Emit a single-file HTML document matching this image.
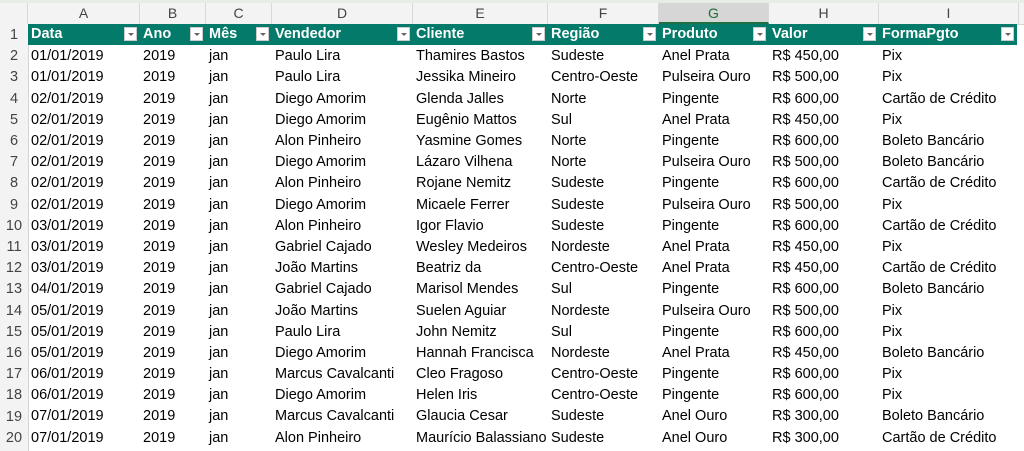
<!DOCTYPE html>
<html><head><meta charset="utf-8"><style>
body{margin:0;width:1024px;height:451px;overflow:hidden;background:#fff;font-family:"Liberation Sans",Calibri,sans-serif;font-size:14.5px;color:#000;position:relative}
.top{position:absolute;left:0;top:0;width:1024px;height:3px;background:#e6ede6}
.colhdr{position:absolute;left:0;top:3px;width:1024px;height:21px;background:#f3f3f3;border-bottom:1px solid #d4d4d4}
.ch{position:absolute;top:3px;height:21px;line-height:21px;text-align:center;color:#444;font-size:14px;border-right:1px solid #d8d8d8;box-sizing:border-box}
.rowhdr{position:absolute;left:0;top:24px;width:28px;height:427px;background:#f3f3f3;border-right:1px solid #d4d4d4}
.rn{position:absolute;left:0;width:28px;text-align:center;color:#444;line-height:21.2px}
table{position:absolute;left:28px;top:24px;border-collapse:collapse;table-layout:fixed}
tr{height:21.2px}
td{padding:2px 0 0 3px;white-space:nowrap;overflow:visible;line-height:19px}
tr.h td{background:#047a6a;color:#fff;font-weight:bold;position:relative;padding-top:0;line-height:21px}
.b{position:absolute;right:3px;top:3px;width:13px;height:14px;background:#fff;border:1px solid #ccc;box-sizing:border-box}
.b:after{content:"";position:absolute;left:3px;top:5px;border-left:3px solid transparent;border-right:3px solid transparent;border-top:3px solid #666}
</style></head><body>
<div class="top"></div>
<div class="colhdr"></div>
<div class="ch" style="left:0;width:28px"></div>
<div class="ch" style="left:28px;width:112px">A</div>
<div class="ch" style="left:140px;width:66px">B</div>
<div class="ch" style="left:206px;width:66px">C</div>
<div class="ch" style="left:272px;width:141px">D</div>
<div class="ch" style="left:413px;width:135px">E</div>
<div class="ch" style="left:548px;width:111px">F</div>
<div class="ch" style="left:659px;width:110px;background:#d6d6d6;color:#1e6b3a;border-bottom:2px solid #1e7145">G</div>
<div class="ch" style="left:769px;width:110px">H</div>
<div class="ch" style="left:879px;width:140px">I</div>
<div class="rowhdr"></div>
<div class="rn" style="top:25px">1<br>2<br>3<br>4<br>5<br>6<br>7<br>8<br>9<br>10<br>11<br>12<br>13<br>14<br>15<br>16<br>17<br>18<br>19<br>20</div>
<table>
<colgroup><col style="width:112px"><col style="width:66px"><col style="width:66px"><col style="width:141px"><col style="width:135px"><col style="width:111px"><col style="width:110px"><col style="width:110px"><col style="width:138px"></colgroup>
<tr class="h"><td>Data<span class="b"></span></td><td>Ano<span class="b"></span></td><td>Mês<span class="b"></span></td><td>Vendedor<span class="b"></span></td><td>Cliente<span class="b"></span></td><td>Região<span class="b"></span></td><td>Produto<span class="b"></span></td><td>Valor<span class="b"></span></td><td>FormaPgto<span class="b"></span></td></tr>
<tr><td>01/01/2019</td><td>2019</td><td>jan</td><td>Paulo Lira</td><td>Thamires Bastos</td><td>Sudeste</td><td>Anel Prata</td><td>R$ 450,00</td><td>Pix</td></tr>
<tr><td>01/01/2019</td><td>2019</td><td>jan</td><td>Paulo Lira</td><td>Jessika Mineiro</td><td>Centro-Oeste</td><td>Pulseira Ouro</td><td>R$ 500,00</td><td>Pix</td></tr>
<tr><td>02/01/2019</td><td>2019</td><td>jan</td><td>Diego Amorim</td><td>Glenda Jalles</td><td>Norte</td><td>Pingente</td><td>R$ 600,00</td><td>Cartão de Crédito</td></tr>
<tr><td>02/01/2019</td><td>2019</td><td>jan</td><td>Diego Amorim</td><td>Eugênio Mattos</td><td>Sul</td><td>Anel Prata</td><td>R$ 450,00</td><td>Pix</td></tr>
<tr><td>02/01/2019</td><td>2019</td><td>jan</td><td>Alon Pinheiro</td><td>Yasmine Gomes</td><td>Norte</td><td>Pingente</td><td>R$ 600,00</td><td>Boleto Bancário</td></tr>
<tr><td>02/01/2019</td><td>2019</td><td>jan</td><td>Diego Amorim</td><td>Lázaro Vilhena</td><td>Norte</td><td>Pulseira Ouro</td><td>R$ 500,00</td><td>Boleto Bancário</td></tr>
<tr><td>02/01/2019</td><td>2019</td><td>jan</td><td>Alon Pinheiro</td><td>Rojane Nemitz</td><td>Sudeste</td><td>Pingente</td><td>R$ 600,00</td><td>Cartão de Crédito</td></tr>
<tr><td>02/01/2019</td><td>2019</td><td>jan</td><td>Diego Amorim</td><td>Micaele Ferrer</td><td>Sudeste</td><td>Pulseira Ouro</td><td>R$ 500,00</td><td>Pix</td></tr>
<tr><td>03/01/2019</td><td>2019</td><td>jan</td><td>Alon Pinheiro</td><td>Igor Flavio</td><td>Sudeste</td><td>Pingente</td><td>R$ 600,00</td><td>Cartão de Crédito</td></tr>
<tr><td>03/01/2019</td><td>2019</td><td>jan</td><td>Gabriel Cajado</td><td>Wesley Medeiros</td><td>Nordeste</td><td>Anel Prata</td><td>R$ 450,00</td><td>Pix</td></tr>
<tr><td>03/01/2019</td><td>2019</td><td>jan</td><td>João Martins</td><td>Beatriz da</td><td>Centro-Oeste</td><td>Anel Prata</td><td>R$ 450,00</td><td>Cartão de Crédito</td></tr>
<tr><td>04/01/2019</td><td>2019</td><td>jan</td><td>Gabriel Cajado</td><td>Marisol Mendes</td><td>Sul</td><td>Pingente</td><td>R$ 600,00</td><td>Boleto Bancário</td></tr>
<tr><td>05/01/2019</td><td>2019</td><td>jan</td><td>João Martins</td><td>Suelen Aguiar</td><td>Nordeste</td><td>Pulseira Ouro</td><td>R$ 500,00</td><td>Pix</td></tr>
<tr><td>05/01/2019</td><td>2019</td><td>jan</td><td>Paulo Lira</td><td>John Nemitz</td><td>Sul</td><td>Pingente</td><td>R$ 600,00</td><td>Pix</td></tr>
<tr><td>05/01/2019</td><td>2019</td><td>jan</td><td>Diego Amorim</td><td>Hannah Francisca</td><td>Nordeste</td><td>Anel Prata</td><td>R$ 450,00</td><td>Boleto Bancário</td></tr>
<tr><td>06/01/2019</td><td>2019</td><td>jan</td><td>Marcus Cavalcanti</td><td>Cleo Fragoso</td><td>Centro-Oeste</td><td>Pingente</td><td>R$ 600,00</td><td>Pix</td></tr>
<tr><td>06/01/2019</td><td>2019</td><td>jan</td><td>Diego Amorim</td><td>Helen Iris</td><td>Centro-Oeste</td><td>Pingente</td><td>R$ 600,00</td><td>Pix</td></tr>
<tr><td>07/01/2019</td><td>2019</td><td>jan</td><td>Marcus Cavalcanti</td><td>Glaucia Cesar</td><td>Sudeste</td><td>Anel Ouro</td><td>R$ 300,00</td><td>Boleto Bancário</td></tr>
<tr><td>07/01/2019</td><td>2019</td><td>jan</td><td>Alon Pinheiro</td><td>Maurício Balassiano</td><td>Sudeste</td><td>Anel Ouro</td><td>R$ 300,00</td><td>Cartão de Crédito</td></tr>
</table>
</body></html>
